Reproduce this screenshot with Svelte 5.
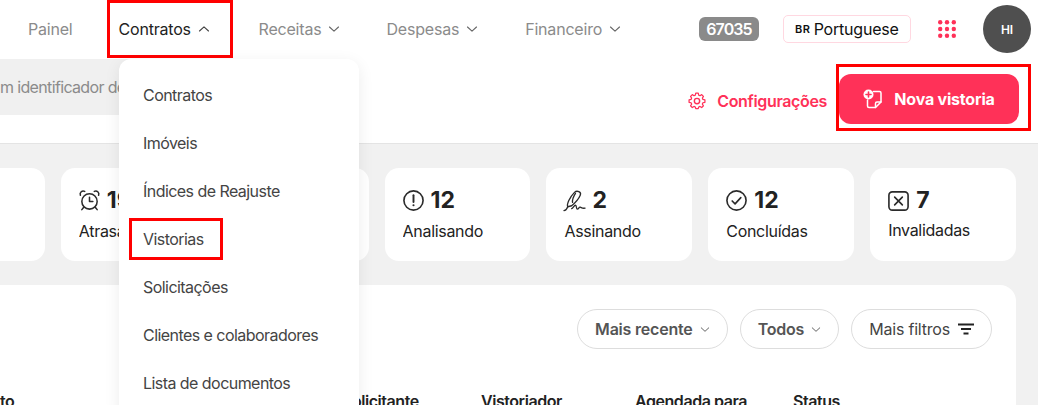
<script>
  const nav = [
    { label: 'Receitas', gap: 46 },
    { label: 'Despesas', gap: 47 },
    { label: 'Financeiro', gap: 0 },
  ]
  const menu = ['Contratos', 'Imóveis', 'Índices de Reajuste', 'Vistorias', 'Solicitações', 'Clientes e colaboradores', 'Lista de documentos']
</script>

{#snippet chevron(up = false)}
  <svg class="chev" viewBox="0 0 12 8" fill="none" stroke="currentColor" stroke-width="1.100" stroke-linecap="round" stroke-linejoin="round">
    <path d={up ? 'M1.500 6L6 1.800 10.500 6' : 'M1.500 2L6 6.200 10.500 2'}/>
  </svg>
{/snippet}

<div class="page">
  <header class="topbar">
    <nav class="nav">
      <a class="link painel" href="#top">Painel</a>
      <a class="link open marked" href="#top">Contratos {@render chevron(true)}</a>
      {#each nav as item}
        <a class="link" href="#top" style="margin-right: {item.gap}px">{item.label} {@render chevron()}</a>
      {/each}
    </nav>
    <div class="tools">
      <span class="badge">67035</span>
      <button class="lang"><span class="flag">BR</span>Portuguese</button>
      <svg class="apps" viewBox="0 0 18 18" width="18" height="18" fill="#ff3158">
        {#each [2.2, 9, 15.8] as cy}
          {#each [2.2, 9, 15.8] as cx}
            <circle {cx} {cy} r="2.2"/>
          {/each}
        {/each}
      </svg>
      <div class="avatar">HI</div>
    </div>
  </header>

  <section class="actions">
    <div class="search">m identificador de contrato</div>
    <a class="config" href="#top">
      <svg viewBox="0 0 24 24" width="20" height="20" fill="none" stroke="currentColor" stroke-width="1.700" stroke-linejoin="round">
        <path d="M10.300 2.500h3.400l.6 2.700 1.800.8 2.300-1.500 2.400 2.400-1.500 2.300.8 1.800 2.700.6v3.400l-2.700.6-.8 1.800 1.500 2.300-2.400 2.400-2.300-1.500-1.800.8-.6 2.100h-3.400l-.6-2.100-1.800-.8-2.300 1.500-2.400-2.400 1.500-2.300-.8-1.800-2.700-.6v-3.400l2.700-.6.8-1.800-1.500-2.300 2.400-2.400 2.300 1.500 1.800-.8z" transform="translate(12 12) scale(.88) translate(-12 -13.200)"/>
        <circle cx="12" cy="12" r="3.200"/>
      </svg>
      Configurações
    </a>
    <div class="marked cta-box">
      <button class="cta">
        <svg viewBox="0 0 20 20" width="20" height="20" fill="none" stroke="#fff" stroke-width="1.500" stroke-linejoin="round" stroke-linecap="round">
          <path d="M10.500 2.500h6A1.500 1.500 0 0 1 18 4v9l-5.500 5.500H6A1.500 1.500 0 0 1 4.500 17v-6"/>
          <path d="M18 13h-4a1.500 1.500 0 0 0-1.500 1.500v4"/>
          <circle cx="5.500" cy="5.500" r="5" fill="#fff" stroke="none"/>
          <path d="M5.500 3v5M3 5.500h5" stroke="#ff3158" stroke-width="1.600"/>
        </svg>
        Nova vistoria
      </button>
    </div>
  </section>

  <main class="main">
    <div class="stats">
      <div class="card"></div>
      <div class="card">
        <div class="value">
          <svg viewBox="0 0 24 24" width="23" height="23" fill="none" stroke="#2b2b2b" stroke-width="1.600" stroke-linecap="round" stroke-linejoin="round">
            <circle cx="12" cy="13" r="8"/>
            <path d="M12 8.500V13h3.500M2.500 6.500a3.200 3.200 0 0 1 4.500-4M21.500 6.500a3.200 3.200 0 0 0-4.500-4M6 19l-2 2.500M18 19l2 2.500"/>
          </svg>
          <b>19</b>
        </div>
        <span class="name">Atrasadas</span>
      </div>
      <div class="card"></div>
      <div class="card">
        <div class="value">
          <svg viewBox="0 0 24 24" width="23" height="23" fill="none" stroke="#2b2b2b" stroke-width="1.700" stroke-linecap="round">
            <circle cx="12" cy="12" r="10"/>
            <path d="M12 6.500v7" stroke-width="2"/>
            <circle cx="12" cy="17" r="1.100" fill="#2b2b2b" stroke="none"/>
          </svg>
          <b>12</b>
        </div>
        <span class="name">Analisando</span>
      </div>
      <div class="card">
        <div class="value">
          <svg viewBox="0 0 24 24" width="23" height="23" fill="none" stroke="#2b2b2b" stroke-width="1.400" stroke-linecap="round" stroke-linejoin="round">
            <path d="M5 18.500C3.500 16 7 8.500 12 3.500c2.500-2.500 7.500-.5 6 3-1.500 3.500-6 8.500-9 11l-4 1z"/>
            <path d="M13 4.500c-2.500 4-3.500 7-3 9.500"/>
            <path d="M1 22.500c1.500 0 3-1.500 4-4M9 20.500c1.500 0 2.500-3.500 4-3.500s.5 4 2 4 1.500-2.500 3-2 2 1.500 5 1"/>
          </svg>
          <b>2</b>
        </div>
        <span class="name">Assinando</span>
      </div>
      <div class="card">
        <div class="value">
          <svg viewBox="0 0 24 24" width="23" height="23" fill="none" stroke="#2b2b2b" stroke-width="1.700" stroke-linecap="round" stroke-linejoin="round">
            <circle cx="12" cy="12" r="10"/>
            <path d="M7.500 12.500l3 3 6-6.500"/>
          </svg>
          <b>12</b>
        </div>
        <span class="name">Concluídas</span>
      </div>
      <div class="card invalid">
        <div class="value">
          <svg viewBox="0 0 24 24" width="23" height="23" fill="none" stroke="#2b2b2b" stroke-width="1.700" stroke-linecap="round">
            <rect x="2" y="3" width="20" height="19" rx="3.500"/>
            <path d="M8 8.500l8 8M16 8.500l-8 8"/>
          </svg>
          <b>7</b>
        </div>
        <span class="name">Invalidadas</span>
      </div>
    </div>

    <div class="panel">
      <div class="filters">
        <button class="pill strong">Mais recente {@render chevron()}</button>
        <button class="pill strong">Todos {@render chevron()}</button>
        <button class="pill">Mais filtros
          <svg viewBox="0 0 16 12" width="16" height="12" fill="none" stroke="#222" stroke-width="1.800">
            <path d="M0 1.500h16M3 6h10M5.500 10.500h5"/>
          </svg>
        </button>
      </div>
      <div class="thead">
        <span>Documento</span>
        <span>Solicitante</span>
        <span>Vistoriador</span>
        <span>Agendada para</span>
        <span>Status</span>
      </div>
    </div>
  </main>

  <div class="dropdown">
    {#each menu as item}
      <div class="entry" class:marked={item === 'Vistorias'}>{item}</div>
    {/each}
  </div>
</div>

<style>
  :global(body) {
    margin: 0;
    background: #fff;
  }
  .page {
    position: relative;
    width: 1038px;
    height: 405px;
    overflow: hidden;
    font-family: Inter, "Noto Sans", sans-serif;
    font-size: 16px;
    letter-spacing: -0.2px;
    color: #222;
  }
  a {
    color: inherit;
    text-decoration: none;
  }
  button {
    font: inherit;
    letter-spacing: inherit;
    background: none;
    cursor: pointer;
  }
  .marked {
    border: 3px solid #f00;
    box-sizing: border-box;
  }

  .topbar {
    display: flex;
    align-items: center;
    height: 58px;
  }
  .nav {
    display: flex;
    align-items: center;
    padding-left: 28px;
  }
  .link {
    display: flex;
    align-items: center;
    gap: 7px;
    color: #8b8b8b;
  }
  .chev {
    flex-shrink: 0;
    width: 12px;
    height: 8px;
  }
  .link .chev {
    color: #666;
  }
  .painel {
    margin-right: 34px;
  }
  .open {
    color: #222;
    height: 58px;
    width: 126px;
    margin-right: 26px;
    padding-left: 9px;
    box-sizing: border-box;
  }
  .open .chev {
    color: #444;
  }
  .tools {
    display: flex;
    align-items: center;
    margin-left: auto;
    padding-right: 7px;
  }
  .badge {
    width: 60px;
    height: 24px;
    line-height: 24px;
    text-align: center;
    background: #8a8a8a;
    color: #fff;
    font-weight: 600;
    border-radius: 6px;
    letter-spacing: -0.9px;
  }
  .lang {
    display: flex;
    align-items: center;
    gap: 3px;
    width: 128px;
    height: 28px;
    margin: 0 27px 0 24px;
    padding: 0 0 0 11px;
    border: 1px solid #ffd8e1;
    border-radius: 5px;
    color: #111;
    box-sizing: border-box;
  }
  .flag {
    font-size: 11px;
    font-weight: 600;
    letter-spacing: 0.6px;
  }
  .apps {
    margin-right: 27px;
  }
  .avatar {
    display: grid;
    place-items: center;
    width: 48px;
    height: 48px;
    border-radius: 50%;
    background: #4f4f4f;
    color: #fff;
    font-size: 12px;
    font-weight: 600;
  }

  .actions {
    display: flex;
    border-bottom: 1px solid #e4e4e4;
    box-sizing: border-box;
    height: 86px;
    padding-top: 1px;
  }
  .search {
    width: 340px;
    height: 56px;
    line-height: 56px;
    background: #f0f0f0;
    color: #8b8b8b;
    white-space: nowrap;
    overflow: hidden;
    letter-spacing: -0.65px;
    border-radius: 0 10px 10px 0;
  }
  .config {
    display: flex;
    align-items: center;
    gap: 10px;
    height: 72px;
    margin: 6px 9px 0 auto;
    color: #ff3158;
    font-weight: 600;
    letter-spacing: -0.35px;
  }
  .cta-box {
    width: 195px;
    height: 67px;
    margin: 5px 7px 0 0;
    padding: 7px 0 0 0;
  }
  .cta {
    display: flex;
    align-items: center;
    justify-content: center;
    gap: 11px;
    width: 180px;
    height: 50px;
    border: 0;
    border-radius: 12px;
    background: #ff3158;
    color: #fff;
    font-weight: 700;
  }

  .main {
    width: 1139px;
    height: 262px;
    margin-left: -101px;
    padding: 24px 22px 0 0;
    box-sizing: border-box;
    background: #f1f1f1;
  }
  .stats {
    display: grid;
    grid-template-columns: repeat(7, 1fr);
    gap: 16px;
  }
  .card {
    height: 93px;
    padding: 20px 18px 0;
    border-radius: 14px;
    background: #fff;
    box-sizing: border-box;
  }
  .value {
    display: flex;
    align-items: center;
    gap: 6px;
    height: 24px;
  }
  .value svg {
    margin-left: -1px;
  }
  .value b {
    font-size: 23px;
    font-weight: 700;
    letter-spacing: 0;
  }
  .name {
    display: block;
    margin-top: 9px;
    line-height: 20px;
    letter-spacing: -0.3px;
    white-space: nowrap;
    overflow: hidden;
  }
  .invalid .name {
    margin-top: 8px;
  }

  .panel {
    margin-top: 24px;
    height: 200px;
    padding-top: 24px;
    border-radius: 16px;
    background: #fff;
  }
  .filters {
    display: flex;
    justify-content: flex-end;
    gap: 12px;
    padding-right: 24px;
  }
  .pill {
    display: flex;
    align-items: center;
    justify-content: center;
    gap: 8px;
    height: 40px;
    padding: 0 17px;
    border: 1px solid #ddd;
    border-radius: 20px;
    color: #444;
  }
  .strong {
    gap: 7px;
    font-weight: 600;
    color: #555;
  }
  .strong .chev {
    width: 10px;
    height: 7px;
  }
  .thead {
    display: grid;
    grid-template-columns: 413px 139px 154px 158px 100px;
    margin-top: 42px;
    padding-left: 30px;
    font-weight: 600;
    letter-spacing: -0.45px;
    color: #222;
  }

  .dropdown {
    position: absolute;
    top: 59px;
    left: 119px;
    width: 240px;
    height: 360px;
    padding-top: 12px;
    border-radius: 12px;
    background: #fff;
    box-shadow: 0 4px 16px rgba(0, 0, 0, 0.08);
    box-sizing: border-box;
  }
  .entry {
    height: 48px;
    padding-left: 24px;
    line-height: 48px;
    color: #444;
    letter-spacing: -0.55px;
    white-space: nowrap;
  }
  .entry.marked {
    width: 94px;
    height: 42px;
    margin: 3px 0 3px 10px;
    padding-left: 11px;
    line-height: 36px;
  }
</style>
